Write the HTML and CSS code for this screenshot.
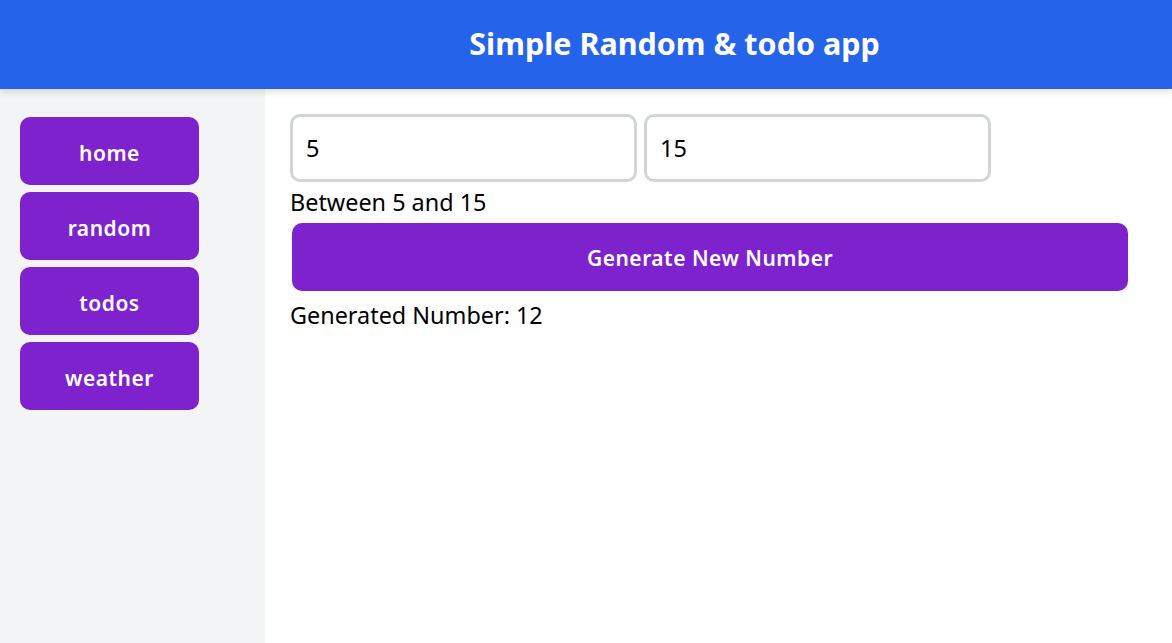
FILE: index.html
```html
<!DOCTYPE html>
<html lang="en">
<head>
<meta charset="utf-8">
<title>Simple Random & todo app</title>
<link rel="stylesheet" href="styles.css">
</head>
<body>
<header class="topbar">
  <h1 class="title">Simple Random &amp; todo app</h1>
</header>
<div class="layout">
  <nav class="sidebar">
    <button class="nav-btn">home</button>
    <button class="nav-btn">random</button>
    <button class="nav-btn">todos</button>
    <button class="nav-btn">weather</button>
  </nav>
  <main class="content">
    <div class="inputs">
      <input class="num-input" type="text" value="5">
      <input class="num-input" type="text" value="15">
    </div>
    <p class="range">Between 5 and 15</p>
    <button class="gen-btn">Generate New Number</button>
    <p class="result">Generated Number: 12</p>
  </main>
</div>
</body>
</html>
```

FILE: styles.css
```css
* { box-sizing: border-box; }
html, body { height: 100%; }
body {
  margin: 0;
  font-family: "Noto Sans", "Open Sans", sans-serif;
  color: #000;
  background: #fff;
  display: flex;
  flex-direction: column;
}
.topbar {
  height: 89px;
  background: #2563eb;
  display: flex;
  align-items: center;
  justify-content: center;
  padding-left: 177px;
  box-shadow: 0 4px 6px rgba(0,0,0,0.1);
  position: relative;
  z-index: 1;
}
.title {
  margin: 0 0 4px;
  color: #fff;
  font-size: 30.5px;
  font-weight: 700;
}
.layout {
  flex: 1;
  display: flex;
}
.sidebar {
  width: 265px;
  background: #f3f4f6;
  padding: 28px 20px;
  display: flex;
  flex-direction: column;
  gap: 7px;
}
.nav-btn {
  width: 179px;
  height: 68px;
  border: none;
  border-radius: 10px;
  background: #7e22ce;
  color: #fff;
  font-family: inherit;
  font-size: 21px;
  font-weight: 600;
  letter-spacing: 0.5px;
  padding: 4px 0 0;
}
.content {
  flex: 1;
  padding: 25px 44px 0 25px;
}
.inputs {
  display: flex;
  gap: 7px;
}
.num-input {
  width: 347px;
  height: 68px;
  border: 3px solid #d1d5db;
  border-radius: 10px;
  padding: 0 13px;
  font-family: inherit;
  font-size: 23.5px;
  color: #000;
  outline: none;
}
.range, .result {
  margin: 0;
  font-size: 23.4px;
  line-height: 31px;
}
.range { margin-top: 5px; }
.gen-btn {
  display: block;
  width: calc(100% - 2px);
  margin: 5px 0 0 2px;
  height: 68px;
  border: none;
  border-radius: 10px;
  background: #7e22ce;
  color: #fff;
  font-family: inherit;
  font-size: 21px;
  font-weight: 600;
  letter-spacing: 0.5px;
  padding: 2px 0 0;
}
.result { margin-top: 9px; }
```
